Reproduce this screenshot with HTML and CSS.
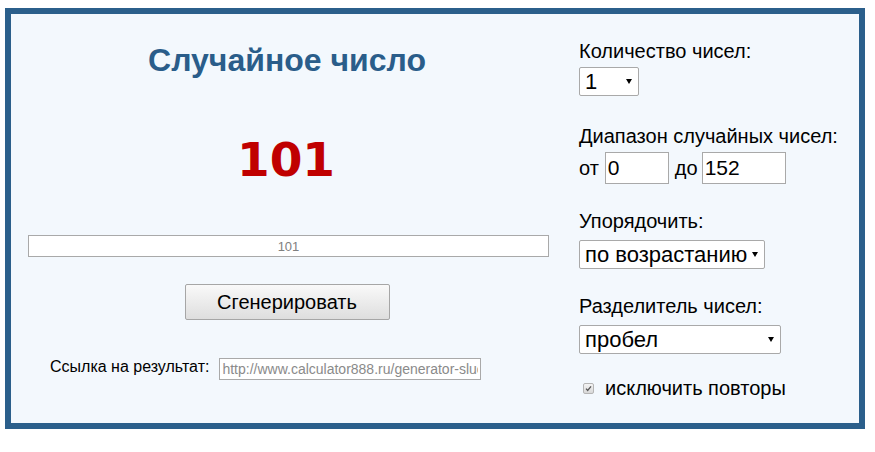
FILE: index.html
```html
<!DOCTYPE html>
<html lang="ru">
<head>
<meta charset="utf-8">
<title>Случайное число</title>
<link rel="stylesheet" href="styles.css">
</head>
<body>
<div class="frame">
  <div class="left">
    <h1 class="title">Случайное число</h1>
    <div class="result">101</div>
    <input class="out" type="text" value="101" readonly>
    <button class="gen" type="button">Сгенерировать</button>
    <div class="link-row">
      <span class="link-label">Ссылка на результат:</span>
      <input class="link" type="text" value="http://www.calculator888.ru/generator-sluchaynogo-chisla/" readonly>
    </div>
  </div>
  <div class="right">
    <div class="label">Количество чисел:</div>
    <span class="sel sel-count"><select><option>1</option></select></span>

    <div class="label label-gap">Диапазон случайных чисел:</div>
    <div class="range">
      <span class="word">от</span>
      <input class="num num-from" type="text" value="0">
      <span class="word word-to">до</span>
      <input class="num num-to" type="text" value="152">
    </div>

    <div class="label label-gap2">Упорядочить:</div>
    <span class="sel sel-gap sel-order"><select><option>по возрастанию</option></select></span>

    <div class="label label-gap2">Разделитель чисел:</div>
    <span class="sel sel-gap sel-sep"><select><option>пробел</option></select></span>

    <div class="check-row">
      <span class="check"><svg width="11" height="11" viewBox="0 0 11 11"><path d="M2.5 5.6 L4.5 7.8 L8.6 2.8" fill="none" stroke="#555" stroke-width="1.6"/></svg></span>
      <span class="check-text">исключить повторы</span>
    </div>
  </div>
</div>
</body>
</html>
```

FILE: styles.css
```css
html, body {
  margin: 0;
  padding: 0;
  background: #ffffff;
}
body {
  font-family: "Liberation Sans", Arial, sans-serif;
  color: #000;
}
.frame {
  margin: 8px 0 0 5px;
  width: 848px;
  height: 409px;
  border: 6px solid #2b5f8b;
  background: #f3f8fd;
  display: flex;
}
.left {
  width: 521px;
  padding: 0 17px;
  display: flex;
  flex-direction: column;
  align-items: center;
}
.title {
  margin: 28px 0 0 -3px;
  font-size: 32px;
  line-height: 37px;
  font-weight: bold;
  color: #2a5d8a;
}
.result {
  margin-top: 53px;
  margin-left: -5px;
  font-family: "DejaVu Sans", Verdana, sans-serif;
  font-weight: bold;
  font-size: 47px;
  line-height: 56px;
  color: #c00000;
  letter-spacing: 0;
}
.out {
  margin-top: 47px;
  box-sizing: border-box;
  width: 521px;
  height: 22px;
  border: 1px solid #a9a9a9;
  background: #fff;
  text-align: center;
  font-family: "Liberation Sans", Arial, sans-serif;
  font-size: 13px;
  color: #808080;
  padding: 0;
  outline: none;
}
.gen {
  margin-top: 27px;
  margin-left: -3px;
  width: 205px;
  height: 36px;
  box-sizing: border-box;
  border: 1px solid #a6a6a6;
  border-radius: 2px;
  background: linear-gradient(#f9f9f9, #dedede);
  font-family: "Liberation Sans", Arial, sans-serif;
  font-size: 20px;
  color: #000;
  padding: 0;
}
.link-row {
  margin-top: 38px;
  align-self: flex-start;
  margin-left: 22px;
  display: flex;
  align-items: center;
}
.link-label {
  font-size: 16px;
  margin-top: -4px;
}
.link {
  margin-left: 10px;
  box-sizing: border-box;
  width: 262px;
  height: 22px;
  border: 1px solid #a9a9a9;
  background: #fff;
  font-family: "Liberation Sans", Arial, sans-serif;
  font-size: 14px;
  color: #8a8a8a;
  padding: 0 2px;
  outline: none;
}
.right {
  padding-left: 13px;
  padding-top: 26px;
  display: flex;
  flex-direction: column;
  align-items: flex-start;
}
.label {
  font-size: 20px;
  line-height: 23px;
}
.label-gap { margin-top: 29px; }
.label-gap2 { margin-top: 26px; }
.sel {
  position: relative;
  display: inline-block;
  margin-top: 4px;
}
.sel-gap { margin-top: 7px; }
.sel select {
  appearance: none;
  -webkit-appearance: none;
  box-sizing: border-box;
  height: 29px;
  border: 1px solid #a9a9a9;
  border-radius: 2px;
  background: #fff;
  font-family: "Liberation Sans", Arial, sans-serif;
  font-size: 22px;
  color: #000;
  padding: 0 0 0 5px;
  outline: none;
  display: block;
}
.sel::after {
  content: "";
  position: absolute;
  right: 7px;
  top: 12px;
  border-left: 3px solid transparent;
  border-right: 3px solid transparent;
  border-top: 5px solid #000;
}
.sel-count select { width: 60px; }
.sel-order select { width: 186px; }
.sel-sep select { width: 202px; }
.range {
  margin-top: 4px;
  display: flex;
  align-items: center;
  font-size: 20px;
}
.word { margin-right: 6px; }
.word-to { margin-left: 6px; margin-right: 4px; }
.num {
  box-sizing: border-box;
  height: 32px;
  border: 1px solid #a9a9a9;
  background: #fff;
  font-family: "Liberation Sans", Arial, sans-serif;
  font-size: 21px;
  color: #000;
  padding: 0 2px;
  outline: none;
}
.num-from { width: 64px; }
.num-to { width: 84px; }
.check-row {
  margin-top: 23px;
  margin-left: 4px;
  display: flex;
  align-items: center;
}
.check {
  box-sizing: border-box;
  width: 11px;
  height: 11px;
  border: 1px solid #b5b5b5;
  border-radius: 2px;
  background: linear-gradient(#f4f4f4, #d8d8d8);
  display: flex;
  align-items: center;
  justify-content: center;
}
.check svg { display: block; }
.check-text {
  margin-left: 11px;
  font-size: 20px;
  line-height: 23px;
}
```
